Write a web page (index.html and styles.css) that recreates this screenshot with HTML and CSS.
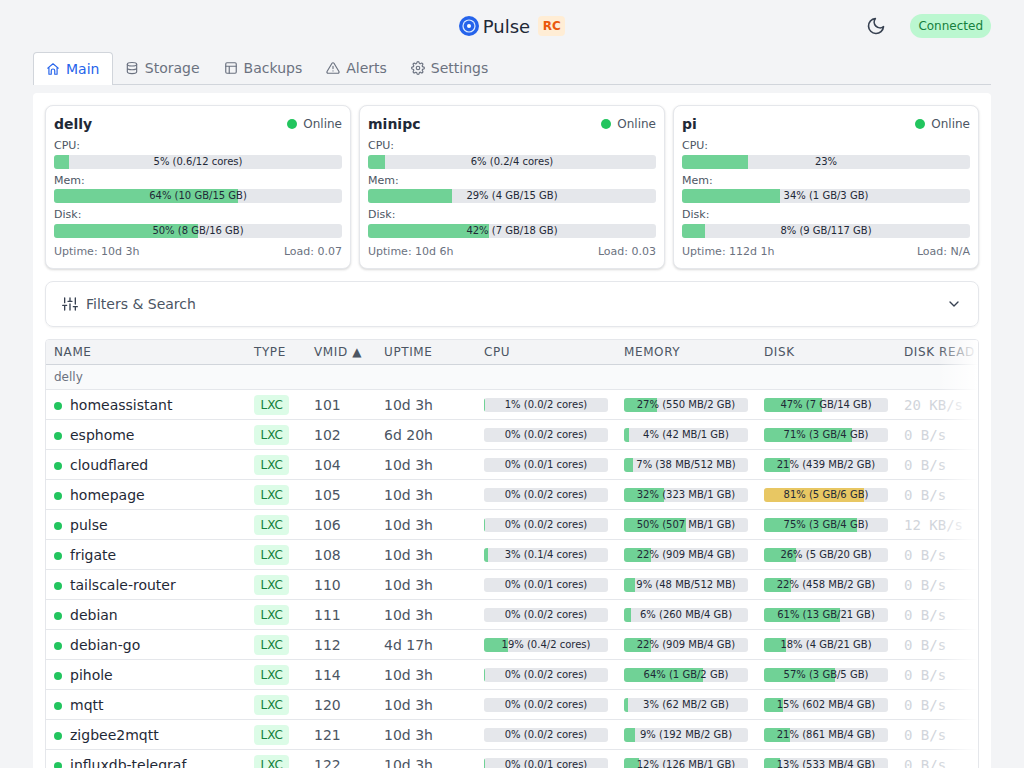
FILE: index.html
```html
<!DOCTYPE html>
<html lang="en">
<head>
    <meta charset="UTF-8">
    <meta name="viewport" content="width=device-width, initial-scale=1.0">
    <title>Pulse</title>
    <link rel="stylesheet" href="styles.css">
</head>
<body>
    <header class="topbar">
        <div></div>
        <div class="brand">
            <svg class="logo" viewBox="0 0 20 20"><circle cx="10" cy="10" r="10" fill="#2563eb"/><circle cx="10" cy="10" r="6.6" fill="#dbeafe"/><circle cx="10" cy="10" r="5.4" fill="#2563eb"/><circle cx="10" cy="10" r="2" fill="#fff"/></svg>
            <span class="brand-name">Pulse</span>
            <span class="brand-tag">RC</span>
        </div>
        <div class="topbar-right">
            <svg class="moon" viewBox="0 0 24 24"><path d="M21 12.79A9 9 0 1 1 11.21 3 7 7 0 0 0 21 12.79z"/></svg>
            <span class="status-pill">Connected</span>
        </div>
    </header>

    <nav class="tabs">
        <a href="#" class="tab active"><svg class="tab-icon" viewBox="0 0 24 24"><path d="M3 10.500 12 3l9 7.500M5 9v12h4v-6a3 3 0 0 1 6 0v6h4V9"/></svg>Main</a>
        <a href="#" class="tab"><svg class="tab-icon" viewBox="0 0 24 24"><ellipse cx="12" cy="5.500" rx="8" ry="3"/><path d="M4 5.500v13c0 1.700 3.600 3 8 3s8-1.300 8-3v-13M4 12c0 1.700 3.600 3 8 3s8-1.300 8-3"/></svg>Storage</a>
        <a href="#" class="tab"><svg class="tab-icon" viewBox="0 0 24 24"><rect x="3" y="3" width="18" height="18" rx="2"/><path d="M3 9h18M9 9v12"/></svg>Backups</a>
        <a href="#" class="tab"><svg class="tab-icon" viewBox="0 0 24 24"><path d="M10.300 3.900 1.800 18a2 2 0 0 0 1.700 3h17a2 2 0 0 0 1.700-3L13.700 3.900a2 2 0 0 0-3.400 0zM12 9v4M12 17h.01"/></svg>Alerts</a>
        <a href="#" class="tab"><svg class="tab-icon" viewBox="0 0 24 24"><circle cx="12" cy="12" r="3"/><path d="M19.400 15a1.650 1.650 0 0 0 .33 1.820l.06.06a2 2 0 0 1 0 2.830 2 2 0 0 1-2.830 0l-.06-.06a1.650 1.650 0 0 0-1.820-.33 1.650 1.650 0 0 0-1 1.510V21a2 2 0 0 1-2 2 2 2 0 0 1-2-2v-.09A1.650 1.650 0 0 0 9 19.400a1.650 1.650 0 0 0-1.820.33l-.06.06a2 2 0 0 1-2.830 0 2 2 0 0 1 0-2.830l.06-.06a1.650 1.650 0 0 0 .33-1.820 1.650 1.650 0 0 0-1.510-1H3a2 2 0 0 1-2-2 2 2 0 0 1 2-2h.09A1.650 1.650 0 0 0 4.600 9a1.650 1.650 0 0 0-.33-1.820l-.06-.06a2 2 0 0 1 0-2.830 2 2 0 0 1 2.830 0l.06.06a1.650 1.650 0 0 0 1.820.33H9a1.650 1.650 0 0 0 1-1.510V3a2 2 0 0 1 2-2 2 2 0 0 1 2 2v.09a1.650 1.650 0 0 0 1 1.510 1.650 1.650 0 0 0 1.820-.33l.06-.06a2 2 0 0 1 2.830 0 2 2 0 0 1 0 2.830l-.06.06a1.650 1.650 0 0 0-.33 1.820V9a1.650 1.650 0 0 0 1.510 1H21a2 2 0 0 1 2 2 2 2 0 0 1-2 2h-.09a1.650 1.650 0 0 0-1.510 1z"/></svg>Settings</a>
    </nav>

    <main class="panel">
        <section class="nodes">
            <div class="node-card">
                <div class="node-head"><span class="node-name">delly</span><span class="node-status"><i class="dot"></i>Online</span></div>
                <div class="metric-label">CPU:</div>
                <div class="bar"><div class="fill" style="width: 5.2%"></div><span>5% (0.6/12 cores)</span></div>
                <div class="metric-label">Mem:</div>
                <div class="bar"><div class="fill" style="width: 64%"></div><span>64% (10 GB/15 GB)</span></div>
                <div class="metric-label">Disk:</div>
                <div class="bar"><div class="fill" style="width: 50%"></div><span>50% (8 GB/16 GB)</span></div>
                <div class="node-foot"><span>Uptime: 10d 3h</span><span>Load: 0.07</span></div>
            </div>
            <div class="node-card">
                <div class="node-head"><span class="node-name">minipc</span><span class="node-status"><i class="dot"></i>Online</span></div>
                <div class="metric-label">CPU:</div>
                <div class="bar"><div class="fill" style="width: 6%"></div><span>6% (0.2/4 cores)</span></div>
                <div class="metric-label">Mem:</div>
                <div class="bar"><div class="fill" style="width: 29%"></div><span>29% (4 GB/15 GB)</span></div>
                <div class="metric-label">Disk:</div>
                <div class="bar"><div class="fill" style="width: 42%"></div><span>42% (7 GB/18 GB)</span></div>
                <div class="node-foot"><span>Uptime: 10d 6h</span><span>Load: 0.03</span></div>
            </div>
            <div class="node-card">
                <div class="node-head"><span class="node-name">pi</span><span class="node-status"><i class="dot"></i>Online</span></div>
                <div class="metric-label">CPU:</div>
                <div class="bar"><div class="fill" style="width: 23%"></div><span>23%</span></div>
                <div class="metric-label">Mem:</div>
                <div class="bar"><div class="fill" style="width: 34%"></div><span>34% (1 GB/3 GB)</span></div>
                <div class="metric-label">Disk:</div>
                <div class="bar"><div class="fill" style="width: 8%"></div><span>8% (9 GB/117 GB)</span></div>
                <div class="node-foot"><span>Uptime: 112d 1h</span><span>Load: N/A</span></div>
            </div>
        </section>

        <section class="filters">
            <div class="filters-title">
                <svg class="filters-icon" viewBox="0 0 24 24"><path d="M4 21v-7M4 10V3M12 21v-9M12 8V3M20 21v-5M20 12V3M1 14h6M9 8h6M17 16h6"/></svg>
                Filters &amp; Search
            </div>
            <svg class="chevron" viewBox="0 0 24 24"><path d="m6 9 6 6 6-6"/></svg>
        </section>

        <section class="table-wrap">
            <table class="guests">
                <thead>
                    <tr>
                        <th class="col-name">Name</th>
                        <th class="col-type">Type</th>
                        <th class="col-vmid">VMID <span class="sort">▲</span></th>
                        <th class="col-uptime">Uptime</th>
                        <th class="col-bar">CPU</th>
                        <th class="col-bar">Memory</th>
                        <th class="col-bar">Disk</th>
                        <th class="col-read">Disk Read</th>
                    </tr>
                </thead>
                <tbody>
                    <tr class="group"><td colspan="8">delly</td></tr>
                    <tr>
                        <td><i class="dot"></i>homeassistant</td><td><span class="type">LXC</span></td><td>101</td><td>10d 3h</td>
                        <td><div class="bar"><div class="fill" style="width: 1%"></div><span>1% (0.0/2 cores)</span></div></td>
                        <td><div class="bar"><div class="fill" style="width: 27%"></div><span>27% (550 MB/2 GB)</span></div></td>
                        <td><div class="bar"><div class="fill" style="width: 47%"></div><span>47% (7 GB/14 GB)</span></div></td>
                        <td class="io">20 KB/s</td>
                    </tr>
                    <tr>
                        <td><i class="dot"></i>esphome</td><td><span class="type">LXC</span></td><td>102</td><td>6d 20h</td>
                        <td><div class="bar"><span>0% (0.0/2 cores)</span></div></td>
                        <td><div class="bar"><div class="fill" style="width: 4%"></div><span>4% (42 MB/1 GB)</span></div></td>
                        <td><div class="bar"><div class="fill" style="width: 71%"></div><span>71% (3 GB/4 GB)</span></div></td>
                        <td class="io">0 B/s</td>
                    </tr>
                    <tr>
                        <td><i class="dot"></i>cloudflared</td><td><span class="type">LXC</span></td><td>104</td><td>10d 3h</td>
                        <td><div class="bar"><span>0% (0.0/1 cores)</span></div></td>
                        <td><div class="bar"><div class="fill" style="width: 7%"></div><span>7% (38 MB/512 MB)</span></div></td>
                        <td><div class="bar"><div class="fill" style="width: 21%"></div><span>21% (439 MB/2 GB)</span></div></td>
                        <td class="io">0 B/s</td>
                    </tr>
                    <tr>
                        <td><i class="dot"></i>homepage</td><td><span class="type">LXC</span></td><td>105</td><td>10d 3h</td>
                        <td><div class="bar"><span>0% (0.0/2 cores)</span></div></td>
                        <td><div class="bar"><div class="fill" style="width: 32%"></div><span>32% (323 MB/1 GB)</span></div></td>
                        <td><div class="bar"><div class="fill warn" style="width: 81%"></div><span>81% (5 GB/6 GB)</span></div></td>
                        <td class="io">0 B/s</td>
                    </tr>
                    <tr>
                        <td><i class="dot"></i>pulse</td><td><span class="type">LXC</span></td><td>106</td><td>10d 3h</td>
                        <td><div class="bar"><div class="fill" style="width: 0.5%"></div><span>0% (0.0/2 cores)</span></div></td>
                        <td><div class="bar"><div class="fill" style="width: 50%"></div><span>50% (507 MB/1 GB)</span></div></td>
                        <td><div class="bar"><div class="fill" style="width: 75%"></div><span>75% (3 GB/4 GB)</span></div></td>
                        <td class="io">12 KB/s</td>
                    </tr>
                    <tr>
                        <td><i class="dot"></i>frigate</td><td><span class="type">LXC</span></td><td>108</td><td>10d 3h</td>
                        <td><div class="bar"><div class="fill" style="width: 3%"></div><span>3% (0.1/4 cores)</span></div></td>
                        <td><div class="bar"><div class="fill" style="width: 22%"></div><span>22% (909 MB/4 GB)</span></div></td>
                        <td><div class="bar"><div class="fill" style="width: 26%"></div><span>26% (5 GB/20 GB)</span></div></td>
                        <td class="io">0 B/s</td>
                    </tr>
                    <tr>
                        <td><i class="dot"></i>tailscale-router</td><td><span class="type">LXC</span></td><td>110</td><td>10d 3h</td>
                        <td><div class="bar"><span>0% (0.0/1 cores)</span></div></td>
                        <td><div class="bar"><div class="fill" style="width: 9%"></div><span>9% (48 MB/512 MB)</span></div></td>
                        <td><div class="bar"><div class="fill" style="width: 22%"></div><span>22% (458 MB/2 GB)</span></div></td>
                        <td class="io">0 B/s</td>
                    </tr>
                    <tr>
                        <td><i class="dot"></i>debian</td><td><span class="type">LXC</span></td><td>111</td><td>10d 3h</td>
                        <td><div class="bar"><span>0% (0.0/2 cores)</span></div></td>
                        <td><div class="bar"><div class="fill" style="width: 6%"></div><span>6% (260 MB/4 GB)</span></div></td>
                        <td><div class="bar"><div class="fill" style="width: 61%"></div><span>61% (13 GB/21 GB)</span></div></td>
                        <td class="io">0 B/s</td>
                    </tr>
                    <tr>
                        <td><i class="dot"></i>debian-go</td><td><span class="type">LXC</span></td><td>112</td><td>4d 17h</td>
                        <td><div class="bar"><div class="fill" style="width: 19%"></div><span>19% (0.4/2 cores)</span></div></td>
                        <td><div class="bar"><div class="fill" style="width: 22%"></div><span>22% (909 MB/4 GB)</span></div></td>
                        <td><div class="bar"><div class="fill" style="width: 18%"></div><span>18% (4 GB/21 GB)</span></div></td>
                        <td class="io">0 B/s</td>
                    </tr>
                    <tr>
                        <td><i class="dot"></i>pihole</td><td><span class="type">LXC</span></td><td>114</td><td>10d 3h</td>
                        <td><div class="bar"><div class="fill" style="width: 0.5%"></div><span>0% (0.0/2 cores)</span></div></td>
                        <td><div class="bar"><div class="fill" style="width: 64%"></div><span>64% (1 GB/2 GB)</span></div></td>
                        <td><div class="bar"><div class="fill" style="width: 57%"></div><span>57% (3 GB/5 GB)</span></div></td>
                        <td class="io">0 B/s</td>
                    </tr>
                    <tr>
                        <td><i class="dot"></i>mqtt</td><td><span class="type">LXC</span></td><td>120</td><td>10d 3h</td>
                        <td><div class="bar"><span>0% (0.0/2 cores)</span></div></td>
                        <td><div class="bar"><div class="fill" style="width: 3%"></div><span>3% (62 MB/2 GB)</span></div></td>
                        <td><div class="bar"><div class="fill" style="width: 15%"></div><span>15% (602 MB/4 GB)</span></div></td>
                        <td class="io">0 B/s</td>
                    </tr>
                    <tr>
                        <td><i class="dot"></i>zigbee2mqtt</td><td><span class="type">LXC</span></td><td>121</td><td>10d 3h</td>
                        <td><div class="bar"><span>0% (0.0/2 cores)</span></div></td>
                        <td><div class="bar"><div class="fill" style="width: 9%"></div><span>9% (192 MB/2 GB)</span></div></td>
                        <td><div class="bar"><div class="fill" style="width: 21%"></div><span>21% (861 MB/4 GB)</span></div></td>
                        <td class="io">0 B/s</td>
                    </tr>
                    <tr>
                        <td><i class="dot"></i>influxdb-telegraf</td><td><span class="type">LXC</span></td><td>122</td><td>10d 3h</td>
                        <td><div class="bar"><div class="fill" style="width: 0.5%"></div><span>0% (0.0/1 cores)</span></div></td>
                        <td><div class="bar"><div class="fill" style="width: 12%"></div><span>12% (126 MB/1 GB)</span></div></td>
                        <td><div class="bar"><div class="fill" style="width: 13%"></div><span>13% (533 MB/4 GB)</span></div></td>
                        <td class="io">0 B/s</td>
                    </tr>
                </tbody>
            </table>
            <div class="fade"></div>
        </section>
    </main>
</body>
</html>
```

FILE: styles.css
```css
* {
    box-sizing: border-box;
}
html, body {
    height: 768px;
    overflow: hidden;
}
body {
    margin: 0;
    padding: 0 33px;
    background-color: #f3f4f6;
    color: #1f2937;
    font-family: "DejaVu Sans", sans-serif;
}
.topbar {
    display: grid;
    grid-template-columns: 1fr auto 1fr;
    align-items: center;
    height: 52px;
}
.brand {
    display: flex;
    align-items: center;
}
.logo {
    width: 20px;
    height: 20px;
    margin-right: 4px;
}
.brand-name {
    font-size: 18px;
    margin-right: 8px;
}
.brand-tag {
    padding: 2px 4.5px;
    height: 20px;
    border-radius: 4px;
    background-color: #ffedd5;
    color: #ea580c;
    font-size: 12px;
    font-weight: 700;
    line-height: 16px;
}
.topbar-right {
    display: flex;
    align-items: center;
    justify-content: flex-end;
    gap: 24px;
}
.moon {
    width: 20px;
    height: 20px;
    fill: none;
    stroke: #374151;
    stroke-width: 2;
    stroke-linecap: round;
    stroke-linejoin: round;
}
.status-pill {
    height: 24px;
    padding: 0 8px;
    border-radius: 12px;
    background-color: #bbf7d0;
    color: #15803d;
    font-size: 12px;
    line-height: 24px;
}
.tabs {
    display: flex;
    height: 33px;
    border-bottom: 1px solid #d1d5db;
}
.tab {
    display: flex;
    align-items: center;
    gap: 6px;
    padding: 0 12px;
    color: #6b7280;
    font-size: 14px;
    text-decoration: none;
}
.tab.active {
    height: 33px;
    padding: 0 12.4px 0 12px;
    border: 1px solid #d1d5db;
    border-bottom: 0;
    border-radius: 4px 4px 0 0;
    background-color: #fff;
    color: #2563eb;
}
.tab-icon {
    width: 14px;
    height: 14px;
    fill: none;
    stroke: currentColor;
    stroke-width: 2;
    stroke-linecap: round;
    stroke-linejoin: round;
}
.panel {
    margin-top: 8px;
    padding: 12px;
    height: 700px;
    background-color: #fff;
    border-radius: 4px 4px 0 0;
}
.nodes {
    display: grid;
    grid-template-columns: repeat(3, 1fr);
    gap: 8px;
}
.node-card {
    height: 164px;
    padding: 8px;
    background-color: #fff;
    border: 1px solid #e5e7eb;
    border-radius: 8px;
    box-shadow: 0 1px 3px rgba(0, 0, 0, 0.1), 0 1px 2px rgba(0, 0, 0, 0.06);
}
.node-head {
    display: flex;
    align-items: center;
    justify-content: space-between;
    height: 20px;
    margin-bottom: 4.4px;
}
.node-name {
    font-size: 14px;
    font-weight: 700;
}
.node-status {
    display: flex;
    align-items: center;
    color: #4b5563;
    font-size: 12px;
}
.node-status .dot {
    width: 10px;
    height: 10px;
    margin-right: 6px;
}
.dot {
    display: inline-block;
    width: 8px;
    height: 8px;
    margin-right: 8px;
    border-radius: 50%;
    background-color: #22c55e;
}
.metric-label {
    height: 16.5px;
    color: #4b5563;
    font-size: 11px;
    line-height: 16px;
}
.bar {
    position: relative;
    height: 14px;
    overflow: hidden;
    border-radius: 3px;
    background-color: #e5e7eb;
    margin-bottom: 4px;
}
.fill {
    height: 100%;
    background-color: rgba(34, 197, 94, 0.6);
}
.fill.warn {
    background-color: rgba(234, 179, 8, 0.6);
}
.bar span {
    position: absolute;
    inset: 0;
    color: #1f2937;
    font-size: 10px;
    line-height: 14px;
    text-align: center;
    white-space: nowrap;
}
.node-foot {
    display: flex;
    justify-content: space-between;
    margin-top: 7px;
    color: #6b7280;
    font-size: 11px;
}
.filters {
    display: flex;
    align-items: center;
    justify-content: space-between;
    height: 46px;
    margin-top: 12px;
    padding: 0 16px;
    border: 1px solid #e5e7eb;
    border-radius: 8px;
    box-shadow: 0 1px 2px rgba(0, 0, 0, 0.05);
}
.filters-title {
    display: flex;
    align-items: center;
    gap: 8px;
    color: #4b5563;
    font-size: 14px;
}
.filters-icon {
    width: 16px;
    height: 16px;
    fill: none;
    stroke: #374151;
    stroke-width: 2;
    stroke-linecap: round;
}
.chevron {
    width: 16px;
    height: 16px;
    fill: none;
    stroke: #374151;
    stroke-width: 2;
    stroke-linecap: round;
    stroke-linejoin: round;
}
.table-wrap {
    position: relative;
    height: 440px;
    margin-top: 12px;
    overflow: hidden;
    border: 1px solid #e5e7eb;
    border-radius: 4px;
}
.guests {
    width: 1000px;
    table-layout: fixed;
    border-collapse: separate;
    border-spacing: 0;
}
.col-name { width: 200px; }
.col-type { width: 60px; }
.col-vmid { width: 70px; }
.col-uptime { width: 100px; }
.col-bar { width: 140px; }
.col-read { width: 150px; }
th {
    height: 25px;
    padding: 0 8px;
    background-color: #f3f4f6;
    border-bottom: 1px solid #d1d5db;
    color: #4b5563;
    font-size: 12px;
    font-weight: 400;
    letter-spacing: 0.6px;
    text-align: left;
    text-transform: uppercase;
    white-space: nowrap;
}
td {
    height: 30px;
    padding: 0 8px;
    border-bottom: 1px solid #e5e7eb;
    color: #4b5563;
    font-size: 14px;
    white-space: nowrap;
}
td:first-child {
    color: #1f2937;
}
td .bar {
    margin: 0;
    width: 124px;
}
.group td {
    height: 25px;
    background-color: #f9fafb;
    color: #6b7280;
    font-size: 12px;
}
.type {
    display: inline-block;
    height: 20px;
    padding: 0 6.5px;
    border-radius: 4px;
    background-color: #dcfce7;
    color: #15803d;
    font-size: 12px;
    line-height: 20px;
}
.io {
    color: #d1d5db;
    font-family: "DejaVu Sans Mono", monospace;
}
.fade {
    position: absolute;
    top: 0;
    right: 0;
    bottom: 0;
    width: 40px;
    background: linear-gradient(to right, rgba(255, 255, 255, 0), #fff);
}
```
